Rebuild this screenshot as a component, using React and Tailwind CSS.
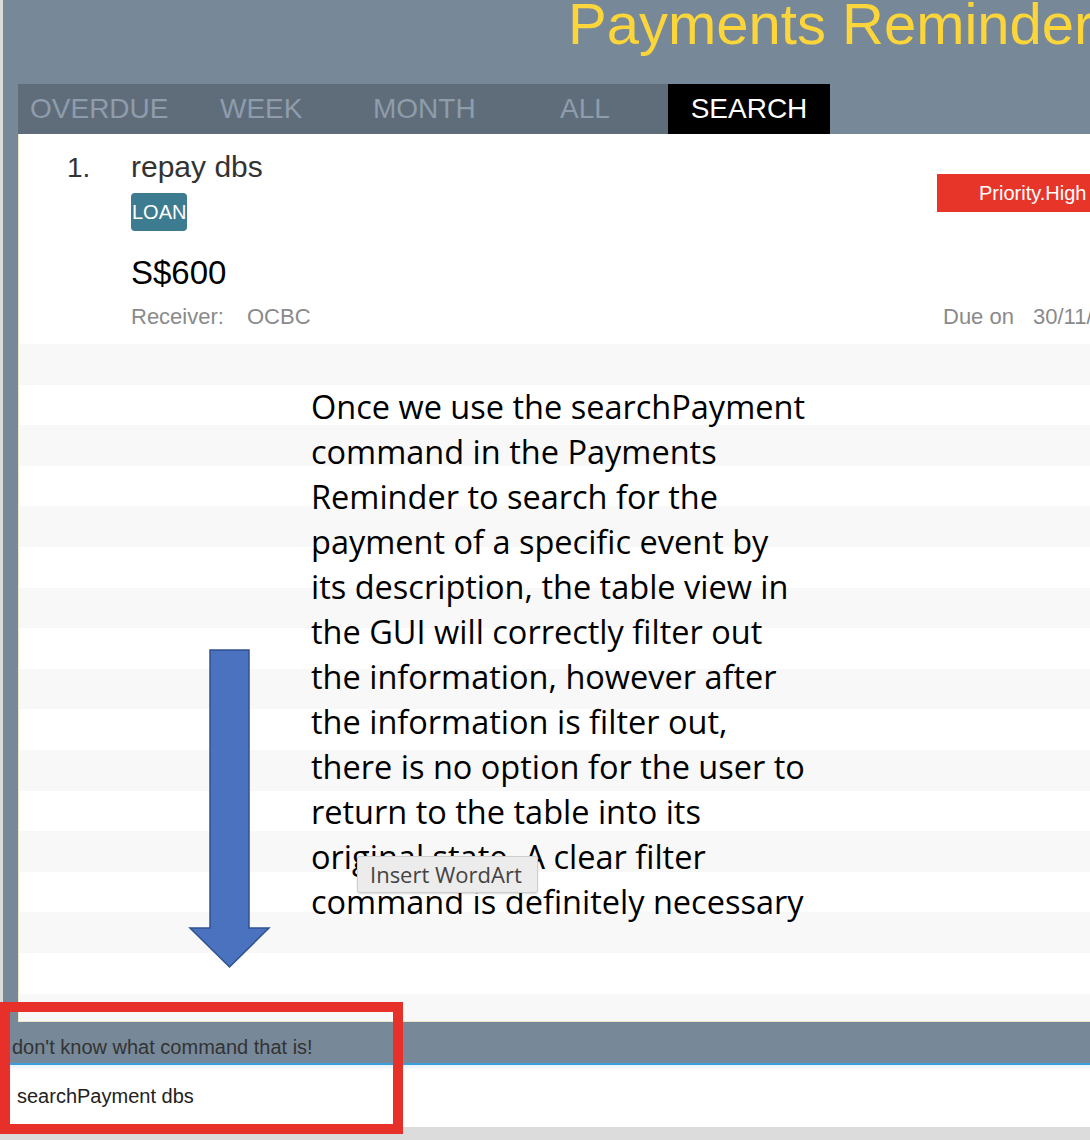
import React from 'react';

const tabs = [
  { label: 'OVERDUE', w: 'w-[190px]' },
  { label: 'WEEK', w: 'w-[153px]' },
  { label: 'MONTH', w: 'w-[187px]' },
  { label: 'ALL', w: 'w-[120px]' },
];

const note = [
  'Once we use the searchPayment',
  'command in the Payments',
  'Reminder to search for the',
  'payment of a specific event by',
  'its description, the table view in',
  'the GUI will correctly filter out',
  'the information, however after',
  'the information is filter out,',
  'there is no option for the user to',
  'return to the table into its',
  'original state. A clear filter',
  'command is definitely necessary',
];

function PaymentCard() {
  return (
    <div className="flex h-[210px] shrink-0 bg-white">
      <div className="w-[112px] shrink-0 pl-[48px] pt-[17px] text-[28px] leading-[34px] text-[#333]">1.</div>
      <div className="w-[806px] shrink-0 pt-[16px]">
        <div className="text-[30px] leading-[34px] text-[#333]">repay dbs</div>
        <div className="mt-[9px] inline-flex h-[38px] items-center rounded-[4px] bg-[#3d7b90] px-[1px] text-[20px] text-white">LOAN</div>
        <div className="mt-[24px] text-[33px] leading-[36px] text-black">S$600</div>
        <div className="mt-[10px] flex whitespace-nowrap text-[22px] leading-[32px] text-[#8a8a8a]">
          <span className="w-[116px]">Receiver:</span>
          <span>OCBC</span>
        </div>
      </div>
      <div className="flex w-[220px] shrink-0 flex-col items-start pt-[40px]">
        <div className="flex h-[38px] w-[190px] shrink-0 items-center bg-[#e8352a] pl-[42px] text-[20px] text-white">Priority.High</div>
        <div className="ml-[6px] mt-[89px] flex shrink-0 whitespace-nowrap text-[22px] leading-[32px] text-[#8a8a8a]">
          <span className="w-[90px]">Due on</span>
          <span>30/11/2019</span>
        </div>
      </div>
    </div>
  );
}

export default function App() {
  const stripes = Array.from({ length: 17 }, (_, i) => i);

  return (
    <div className="relative h-[1140px] w-[1090px] overflow-hidden bg-[#dcdcdc] font-['Liberation_Sans',Arial,sans-serif]">
      <div className="ml-[3px] flex h-[1127px] w-[1200px] flex-col bg-[#778899]">
        <div className="h-[84px] shrink-0">
          <div className="-mt-[5px] whitespace-nowrap pl-[565px] text-[58px] leading-[58px] text-[#fbd53a]">Payments Reminder</div>
        </div>

        <div className="ml-[15px] flex h-[50px] shrink-0">
          <div className="flex bg-[#5f6d7b]">
            {tabs.map(t => (
              <div key={t.label} className={`flex items-center pl-[12px] text-[28px] leading-[28px] text-[#8e9cab] ${t.w}`}>{t.label}</div>
            ))}
          </div>
          <div className="flex w-[162px] items-center justify-center bg-black text-[28px] leading-[28px] text-white">SEARCH</div>
        </div>

        <div className="ml-[15px] flex h-[888px] shrink-0 flex-col overflow-hidden border-b border-l border-[#ece6c8] bg-white">
          <PaymentCard />
          {stripes.map(i => (
            <div key={i} className={`h-[40.6px] shrink-0 ${i % 2 === 0 ? 'bg-[#f8f8f8]' : 'bg-white'}`} />
          ))}
        </div>

        <div className="flex h-[41px] shrink-0 items-center whitespace-nowrap pl-[9px] pt-[8px] text-[20px] text-[#333]">don't know what command that is!</div>
        <div className="h-[2px] shrink-0 bg-[#3a9fdb]" />
        <div className="flex h-[62px] shrink-0 items-center bg-white pl-[14px] text-[20px] text-[#222] shadow-[inset_0_3px_3px_rgba(58,159,219,0.12)]">searchPayment dbs</div>
      </div>

      {/* annotation arrow */}
      <svg className="absolute left-[188px] top-[648px]" width="84" height="322" viewBox="0 0 84 322">
        <path d="M22 2 H61 V280 H81 L41.5 319 L2 280 H22 Z" fill="#4a72be" stroke="#2f5290" strokeWidth="1.5" strokeLinejoin="miter" />
      </svg>

      {/* annotation text */}
      <div className="absolute left-[311px] top-[384px] font-['Open_Sans',sans-serif] text-[32.5px] leading-[45px] text-black">
        {note.map(line => (
          <div key={line} className="whitespace-nowrap">{line}</div>
        ))}
      </div>

      {/* tooltip */}
      <div className="absolute left-[357px] top-[856px] flex h-[37px] w-[181px] items-center rounded-[3px] border border-[#cfcfcf] bg-[#ececec] pl-[12px] font-['Open_Sans',sans-serif] text-[22px] text-[#444] shadow-[0_1px_2px_rgba(0,0,0,0.15)]">Insert WordArt</div>

      {/* highlight box */}
      <div className="absolute left-0 top-[1002px] h-[132px] w-[403px] border-[10px] border-[#e8302a]" />
    </div>
  );
}
